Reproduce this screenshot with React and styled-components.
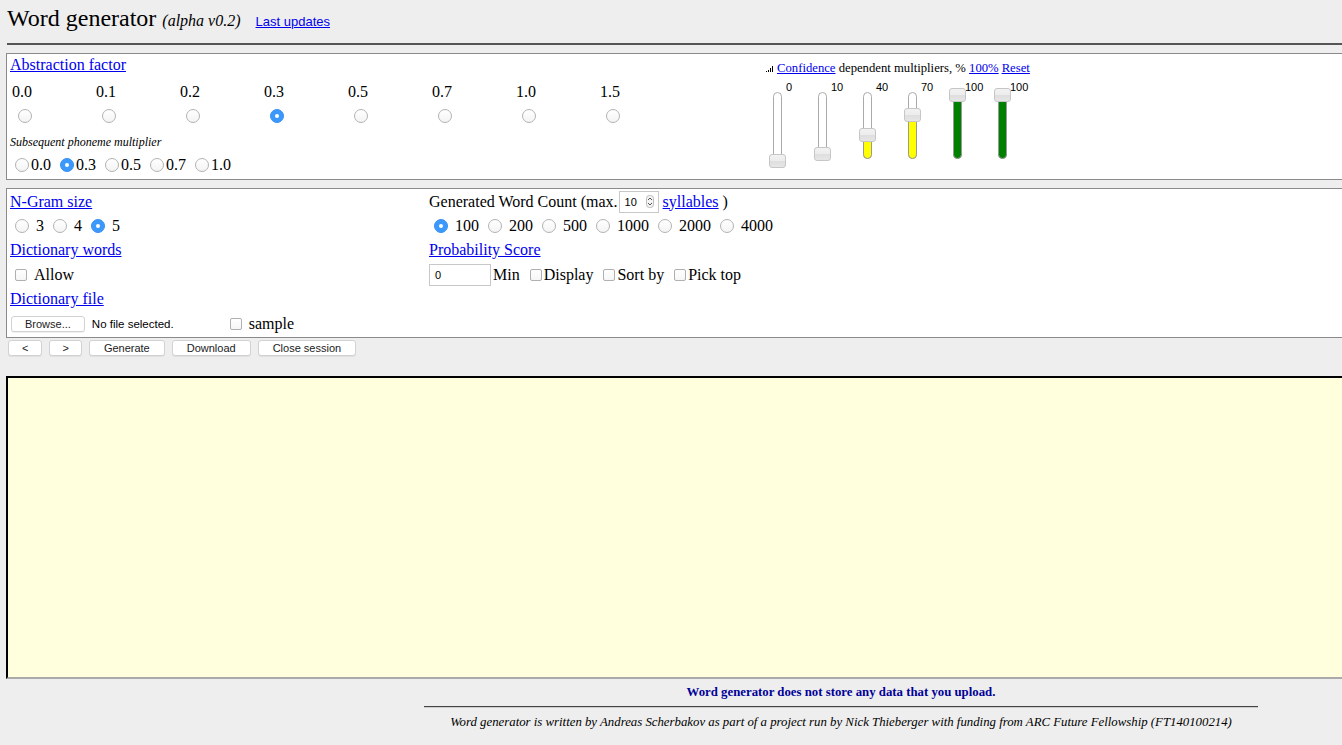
import React from "react";
import styled, { createGlobalStyle, css } from "styled-components";

const SERIF = `"Liberation Serif", "Times New Roman", serif`;
const SANS = `"Liberation Sans", Arial, sans-serif`;

const Global = createGlobalStyle`
  html, body { margin: 0; padding: 0; background: #eeeeee; overflow: hidden; }
  body { font-family: ${SERIF}; font-size: 16px; color: #000; }
`;

const Page = styled.div`
  width: 1670px;
  padding-left: 6px;
`;

const Header = styled.header`
  display: flex;
  align-items: baseline;
  padding: 4px 0 0 1px;
  height: 28px;
  line-height: 28px;
`;

const Title = styled.h1`
  margin: 0;
  font-size: 24px;
  font-weight: normal;
`;

const Version = styled.span`
  font-style: italic;
  font-size: 16px;
  margin-left: 6px;
`;

const UpdatesLink = styled.a`
  font-family: ${SANS};
  font-size: 13px;
  color: #0000ee;
  text-decoration: underline;
  margin-left: 15px;
`;

const Rule = styled.div`
  height: 2px;
  background: #555;
  margin: 11px 0 8px 1px;
`;

const Panel = styled.section`
  background: #fff;
  border: 1px solid #8a8a8a;
  display: flex;
  margin-top: ${(p) => p.$mt || 0}px;
`;

const Link = styled.a`
  color: #0000ee;
  text-decoration: underline;
  font-size: ${(p) => p.$size || 16}px;
  margin-left: ${(p) => p.$ml || 0}px;
  cursor: pointer;
`;

const LeftCol = styled.div`
  width: ${(p) => p.$w}px;
  padding: 0 0 ${(p) => p.$pb || 0}px 3px;
  box-sizing: border-box;
  flex: none;
`;

const LinkRow = styled.div`
  height: ${(p) => p.$h || 22}px;
  line-height: ${(p) => p.$h || 22}px;
`;

const FactorGrid = styled.div`
  display: grid;
  grid-template-columns: repeat(8, 84px);
  margin: 6px 0 0 2px;
`;

const FactorCell = styled.div`
  display: flex;
  flex-direction: column;
  align-items: flex-start;
  line-height: 20px;
`;

const radioBase = css`
  display: inline-block;
  box-sizing: border-box;
  width: 14px;
  height: 14px;
  border-radius: 50%;
  flex: none;
  position: relative;
  border: 1px solid #b3b3b3;
  background: linear-gradient(#fff, #f4f4f4);
  ${(p) =>
    p.$on &&
    css`
      border-color: #3a8ff5;
      background: #3b99fc;
      &::after {
        content: "";
        position: absolute;
        width: 4px;
        height: 4px;
        border-radius: 50%;
        background: #fff;
        left: 4px;
        top: 4px;
      }
    `}
`;

const Radio = styled.span`
  ${radioBase}
`;

const GridRadio = styled.span`
  ${radioBase}
  margin: 7px 0 0 6px;
`;

const Subtitle = styled.div`
  font-style: italic;
  font-size: 12px;
  line-height: 20px;
  margin-top: 9px;
`;

const OptionRow = styled.div`
  display: flex;
  align-items: center;
  height: ${(p) => p.$h || 20}px;
  margin-top: ${(p) => p.$mt || 0}px;
  white-space: nowrap;
`;

const RadioItem = styled.span`
  display: inline-flex;
  align-items: center;
  margin: 0 4px 0 5px;
  & > span:last-child {
    margin-left: ${(p) => p.$gap}px;
  }
`;

const Checkbox = styled.span`
  display: inline-block;
  box-sizing: border-box;
  width: 12px;
  height: 12px;
  border: 1px solid #b0b0b0;
  border-radius: 2px;
  background: linear-gradient(#fff, #f6f6f6);
  flex: none;
`;

const CheckItem = styled.span`
  display: inline-flex;
  align-items: center;
  margin-left: ${(p) => p.$ml}px;
  & > ${Checkbox} {
    margin-right: ${(p) => p.$gap}px;
  }
`;

const RightCol = styled.div`
  margin-left: 82px;
  flex: none;
`;

const ConfHeader = styled.div`
  margin-top: 7px;
  font-size: 12.7px;
  line-height: 14px;
  display: flex;
  align-items: baseline;
  white-space: pre;
`;

const Sliders = styled.div`
  display: flex;
  margin-top: 7px;
`;

const SliderCol = styled.div`
  width: 45px;
  flex: none;
`;

const SliderValue = styled.div`
  font-family: ${SANS};
  font-size: 11px;
  line-height: 10px;
  height: 10px;
  margin-left: ${(p) => p.$ml}px;
`;

const Track = styled.div`
  position: relative;
  box-sizing: border-box;
  width: 9px;
  height: 67px;
  margin: 0 0 0 7px;
  border: 1px solid #aaa;
  border-radius: 5px;
  background: #fff;
`;

const Fill = styled.div`
  position: absolute;
  left: -1px;
  right: -1px;
  bottom: -1px;
  border-radius: 0 0 5px 5px;
  background: ${(p) => p.$color};
  border: 1px solid #999;
  box-sizing: border-box;
`;

const Thumb = styled.div`
  position: absolute;
  left: -5px;
  width: 17px;
  height: 14px;
  box-sizing: border-box;
  border: 1px solid #c6c6c6;
  border-radius: 3px;
  background: linear-gradient(#f2f2f2 0%, #ececec 50%, #dedede 51%, #e6e6e6 100%);
`;

const ColumnBox = styled.div`
  width: ${(p) => p.$w}px;
  padding-left: ${(p) => p.$pl}px;
  padding-bottom: 1px;
  box-sizing: border-box;
  flex: none;
`;

const Row = styled.div`
  display: flex;
  align-items: center;
  height: ${(p) => p.$h || 24}px;
  white-space: nowrap;
`;

const NumberBox = styled.span`
  display: inline-flex;
  align-items: center;
  justify-content: space-between;
  box-sizing: border-box;
  width: 40px;
  height: 22px;
  border: 1px solid #c8c8c8;
  background: #fff;
  font-family: ${SANS};
  font-size: 11px;
  padding: 0 4px 0 5px;
  margin-left: 1px;
`;

const TextBox = styled.span`
  display: inline-flex;
  align-items: center;
  box-sizing: border-box;
  width: 62px;
  height: 22px;
  border: 1px solid #c8c8c8;
  background: #fff;
  font-family: ${SANS};
  font-size: 11px;
  padding-left: 5px;
  margin-right: 2px;
`;

const Button = styled.button`
  font-family: ${SANS};
  font-size: 11px;
  color: #222;
  height: 16px;
  line-height: 14px;
  padding: 0 ${(p) => p.$px || 14}px;
  background: #fff;
  border: 1px solid #d2d2d2;
  border-radius: 3px;
  box-shadow: 0 1px 0 rgba(0, 0, 0, 0.06);
  cursor: pointer;
`;

const FileName = styled.span`
  font-family: ${SANS};
  font-size: 11.5px;
  margin-left: 7px;
`;

const ButtonBar = styled.div`
  display: flex;
  gap: 7px;
  margin: 2px 0 0 2px;
`;

const Output = styled.div`
  margin-top: 20px;
  height: 303px;
  box-sizing: border-box;
  background: #ffffdd;
  border-top: 2px solid #000;
  border-left: 2px solid #000;
  border-bottom: 2px solid #aaa;
  border-right: 2px solid #aaa;
`;

const Footer = styled.footer`
  text-align: center;
`;

const Notice = styled.div`
  margin-top: 5px;
  font-size: 12.8px;
  font-weight: bold;
  color: #000099;
  line-height: 16px;
`;

const FooterRule = styled.div`
  width: 834px;
  margin: 6px auto 0;
  height: 1px;
  background: #444;
  border-bottom: 1px solid #ccc;
`;

const Credits = styled.div`
  margin-top: 6px;
  font-size: 12.8px;
  font-style: italic;
  line-height: 16px;
`;

const Spinner = () => (
  <svg width="8" height="13" viewBox="0 0 8 13">
    <rect x="0.5" y="0.5" width="7" height="12" rx="3" fill="#f4f4f4" stroke="#bbb" />
    <path d="M2 5 L4 3 L6 5" fill="none" stroke="#555" strokeWidth="1" />
    <path d="M2 8 L4 10 L6 8" fill="none" stroke="#555" strokeWidth="1" />
  </svg>
);

const SignalIcon = () => (
  <svg width="7" height="7" viewBox="0 0 7 7" style={{ marginRight: 4 }}>
    <rect x="0" y="6" width="1" height="1" fill="#000" />
    <rect x="2" y="5" width="1" height="2" fill="#000" />
    <rect x="4" y="3" width="1" height="4" fill="#000" />
    <rect x="6" y="1" width="1" height="6" fill="#000" />
  </svg>
);

const factors = ["0.0", "0.1", "0.2", "0.3", "0.5", "0.7", "1.0", "1.5"];
const sliders = [
  { v: 0 },
  { v: 10 },
  { v: 40, c: "#ffff00" },
  { v: 70, c: "#ffff00" },
  { v: 100, c: "#008000" },
  { v: 100, c: "#008000" },
];

function Slider({ v, c }) {
  const center = 68 - v * 0.66; // relative to track top
  return (
    <SliderCol>
      <SliderValue $ml={v >= 100 ? 19 : 20}>{v}</SliderValue>
      <Track>
        {c && <Fill $color={c} style={{ top: center }} />}
        <Thumb style={{ top: center - 7 }} />
      </Track>
    </SliderCol>
  );
}

const rowHeights = [25, 24, 24, 25, 24, 25];

export default function App() {
  return (
    <Page>
      <Global />
      <Header>
        <Title>Word generator</Title>
        <Version>(alpha v0.2)</Version>
        <UpdatesLink>Last updates</UpdatesLink>
      </Header>
      <Rule />

      <Panel>
        <LeftCol $w={677} $pb={4}>
          <LinkRow>
            <Link>Abstraction factor</Link>
          </LinkRow>
          <FactorGrid>
            {factors.map((f) => (
              <FactorCell key={f}>
                <span>{f}</span>
                <GridRadio $on={f === "0.3"} />
              </FactorCell>
            ))}
          </FactorGrid>
          <Subtitle>Subsequent phoneme multiplier</Subtitle>
          <OptionRow $mt={3}>
            {["0.0", "0.3", "0.5", "0.7", "1.0"].map((m) => (
              <RadioItem key={m} $gap={2}>
                <Radio $on={m === "0.3"} />
                <span>{m}</span>
              </RadioItem>
            ))}
          </OptionRow>
        </LeftCol>
        <RightCol>
          <ConfHeader>
            <SignalIcon />
            <Link $size={12.7}>Confidence</Link>
            {" dependent multipliers, % "}
            <Link $size={12.7}>100%</Link>
            <Link $size={12.7} $ml={3}>Reset</Link>
          </ConfHeader>
          <Sliders>
            {sliders.map((s, i) => (
              <Slider key={i} {...s} />
            ))}
          </Sliders>
        </RightCol>
      </Panel>

      <Panel $mt={8}>
        <ColumnBox $w={422} $pl={3}>
          <Row $h={rowHeights[0]}>
            <Link>N-Gram size</Link>
          </Row>
          <Row $h={rowHeights[1]}>
            {["3", "4", "5"].map((n) => (
              <RadioItem key={n} $gap={7}>
                <Radio $on={n === "5"} />
                <span>{n}</span>
              </RadioItem>
            ))}
          </Row>
          <Row $h={rowHeights[2]}>
            <Link>Dictionary words</Link>
          </Row>
          <Row $h={rowHeights[3]}>
            <CheckItem $ml={5} $gap={7}>
              <Checkbox />
              <span>Allow</span>
            </CheckItem>
          </Row>
          <Row $h={rowHeights[4]}>
            <Link>Dictionary file</Link>
          </Row>
          <Row $h={rowHeights[5]}>
            <Button $px={13} style={{ marginLeft: 1 }}>Browse...</Button>
            <FileName>No file selected.</FileName>
            <CheckItem $ml={56} $gap={7}>
              <Checkbox />
              <span>sample</span>
            </CheckItem>
          </Row>
        </ColumnBox>
        <ColumnBox $w={600} $pl={0}>
          <Row $h={rowHeights[0]}>
            <span>Generated Word Count (max.</span>
            <NumberBox>
              <span>10</span>
              <Spinner />
            </NumberBox>
            <span>&nbsp;</span>
            <Link>syllables</Link>
            <span>&nbsp;)</span>
          </Row>
          <Row $h={rowHeights[1]}>
            {["100", "200", "500", "1000", "2000", "4000"].map((n) => (
              <RadioItem key={n} $gap={7}>
                <Radio $on={n === "100"} />
                <span>{n}</span>
              </RadioItem>
            ))}
          </Row>
          <Row $h={rowHeights[2]}>
            <Link>Probability Score</Link>
          </Row>
          <Row $h={rowHeights[3]}>
            <TextBox>0</TextBox>
            <span>Min</span>
            <CheckItem $ml={10} $gap={2}>
              <Checkbox />
              <span>Display</span>
            </CheckItem>
            <CheckItem $ml={10} $gap={2}>
              <Checkbox />
              <span>Sort by</span>
            </CheckItem>
            <CheckItem $ml={10} $gap={2}>
              <Checkbox />
              <span>Pick top</span>
            </CheckItem>
          </Row>
        </ColumnBox>
      </Panel>

      <ButtonBar>
        <Button $px={13}>&lt;</Button>
        <Button $px={12}>&gt;</Button>
        <Button>Generate</Button>
        <Button>Download</Button>
        <Button>Close session</Button>
      </ButtonBar>

      <Output />

      <Footer>
        <Notice>Word generator does not store any data that you upload.</Notice>
        <FooterRule />
        <Credits>
          Word generator is written by Andreas Scherbakov as part of a project run by Nick
          Thieberger with funding from ARC Future Fellowship (FT140100214)
        </Credits>
      </Footer>
    </Page>
  );
}
